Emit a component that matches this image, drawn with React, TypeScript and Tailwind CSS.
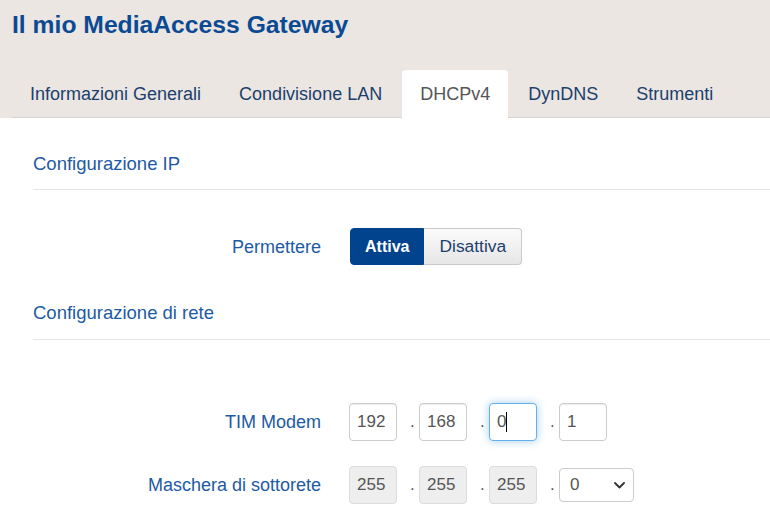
import React from "react";

const font = { fontFamily: '"Liberation Sans", Arial, Helvetica, sans-serif' };

function Field({ value, focused, disabled }: { value: string; focused?: boolean; disabled?: boolean }) {
  const base =
    "w-[48px] h-[38px] rounded-[4px] border flex items-center pl-[7px] text-[17px] text-[#555]";
  if (focused) {
    return (
      <div className={`${base} bg-white border-[#66afe9] shadow-[0_0_8px_rgba(102,175,233,0.6)]`}>
        <span>{value}</span>
        <span className="w-px h-[20px] bg-black" />
      </div>
    );
  }
  if (disabled) {
    return <div className={`${base} bg-[#eeeeee] border-[#dcdcdc]`}>{value}</div>;
  }
  return <div className={`${base} bg-white border-[#cccccc] shadow-[inset_0_1px_1px_rgba(0,0,0,0.075)]`}>{value}</div>;
}

function Dot() {
  return <span className="ml-[13px] mr-[4px] w-[5px] h-[38px] text-[17px] text-[#555] leading-[38px]">.</span>;
}

function Row({ label, children, className }: { label: string; children: React.ReactNode; className?: string }) {
  return (
    <div className={`flex items-center ${className ?? ""}`}>
      <div className="w-[288px] text-right text-[18px] text-[#1d5aa3] leading-[26px]">{label}</div>
      <div className="ml-[28px] flex items-center">{children}</div>
    </div>
  );
}

export default function App() {
  const tabs = ["Informazioni Generali", "Condivisione LAN", "DHCPv4", "DynDNS", "Strumenti"];
  return (
    <div style={font} className="w-[770px] h-[514px] overflow-hidden bg-white">
      <div className="bg-[#ebe6e2] pt-[10px]">
        <div className="pl-[12px] h-[30px] leading-[30px] text-[24.7px] font-bold text-[#0b4a93]">
          Il mio MediaAccess Gateway
        </div>
        <div className="mt-[30px] ml-[12px] h-[48px] flex items-end gap-[2px] border-b border-[#d9d5d2]">
          {tabs.map((t) => {
            const active = t === "DHCPv4";
            return (
              <div
                key={t}
                className={`h-[48px] -mb-px px-[18px] flex items-center text-[18px] rounded-t-[4px] ${
                  active ? "bg-white text-[#555555]" : "text-[#1c3f6c]"
                }`}
              >
                {t}
              </div>
            );
          })}
        </div>
      </div>

      <div className="pl-[33px]">
        <div className="mt-[33px] pb-[12px] border-b border-[#e5e5e5] text-[18.5px] leading-[26px] text-[#1d5aa3]">
          Configurazione IP
        </div>

        <div className="mt-[38px] flex items-center">
          <div className="w-[288px] text-right text-[18px] text-[#1d5aa3] leading-[26px]">Permettere</div>
          <div className="ml-[29px] flex h-[37px]">
            <div className="h-full px-[14px] flex items-center bg-[#02438d] border border-[#02438d] rounded-l-[4px] text-white font-bold text-[16px]">
              Attiva
            </div>
            <div className="h-full px-[15px] flex items-center bg-gradient-to-b from-[#fbfbfb] to-[#e6e6e6] border border-l-0 border-[#c9c9c9] rounded-r-[4px] text-[#1c3f6c] text-[17.4px]">
              Disattiva
            </div>
          </div>
        </div>

        <div className="mt-[35px] pb-[13px] border-b border-[#e5e5e5] text-[18.5px] leading-[26px] text-[#1d5aa3]">
          Configurazione di rete
        </div>

        <Row label="TIM Modem" className="mt-[63px]">
          <Field value="192" />
          <Dot />
          <Field value="168" />
          <Dot />
          <Field value="0" focused />
          <Dot />
          <Field value="1" />
        </Row>

        <Row label="Maschera di sottorete" className="mt-[25px]">
          <Field value="255" disabled />
          <Dot />
          <Field value="255" disabled />
          <Dot />
          <Field value="255" disabled />
          <Dot />
          <div className="w-[75px] h-[34px] rounded-[4px] border border-[#cccccc] bg-white flex items-center justify-between pl-[10px] pr-[8px] text-[17px] text-[#555]">
            <span>0</span>
            <svg width="11" height="7" viewBox="0 0 11 7" fill="none">
              <polyline points="1,1 5.5,5.5 10,1" stroke="#333" strokeWidth="1.8" strokeLinecap="round" strokeLinejoin="round" />
            </svg>
          </div>
        </Row>
      </div>
    </div>
  );
}
